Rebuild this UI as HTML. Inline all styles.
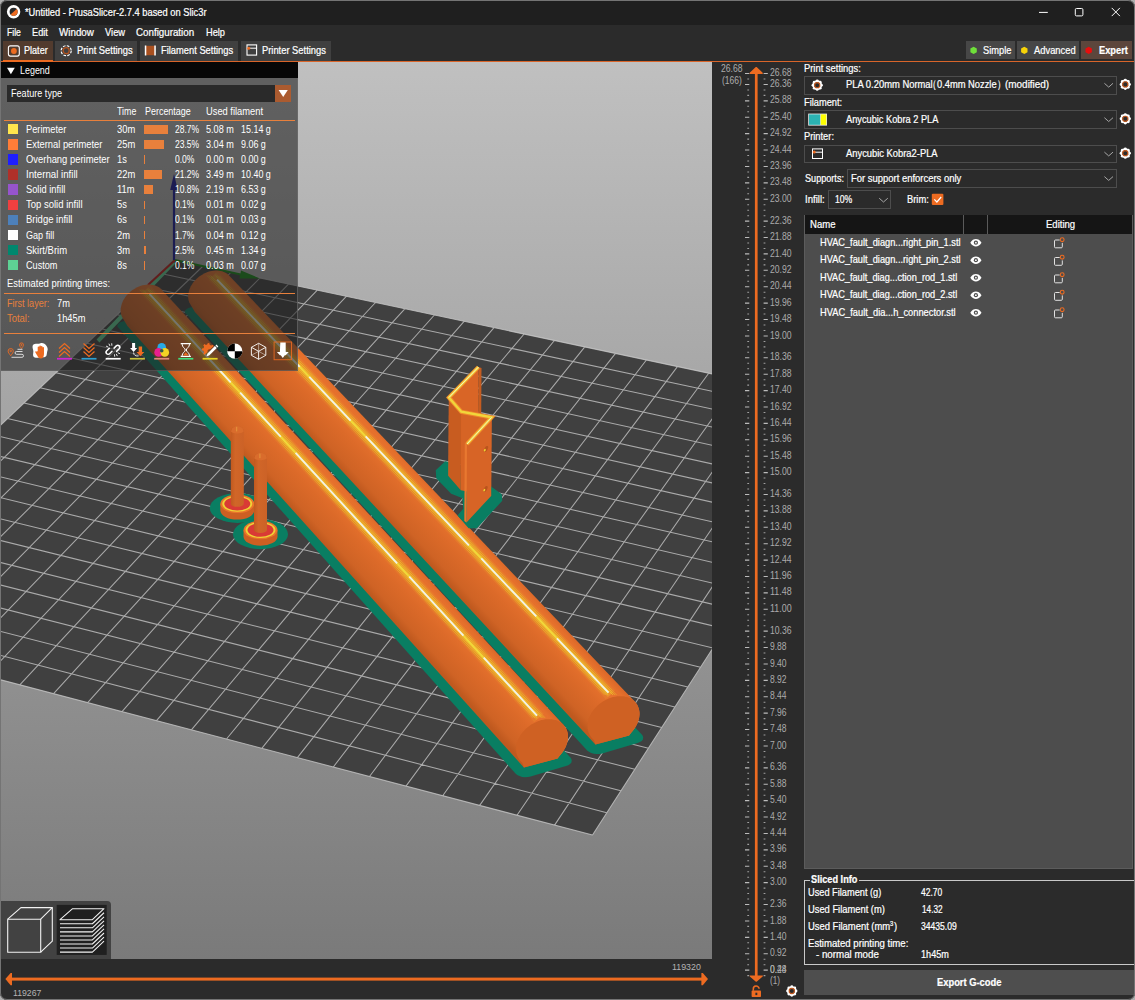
<!DOCTYPE html>
<html lang="en"><head><meta charset="utf-8"><title>*Untitled - PrusaSlicer-2.7.4 based on Slic3r</title>
<style>
html,body{margin:0;padding:0;background:#2b2b2b;}
body{width:1135px;height:1000px;position:relative;overflow:hidden;font-family:"Liberation Sans",sans-serif;}
.b{position:absolute;box-sizing:border-box;}
.t{position:absolute;white-space:pre;transform-origin:0 50%;}
.w{-webkit-text-stroke:0.22px;}
.scene{position:absolute;left:0;top:62px;}
</style></head>
<body>
<svg class="scene" width="712" height="897" viewBox="0 0 712 897">
<linearGradient id="bg" x1="0" y1="0" x2="0" y2="1"><stop offset="0" stop-color="#c0c0c0"/><stop offset="1" stop-color="#7a7a7a"/></linearGradient>
<rect width="712" height="897" fill="url(#bg)"/>
<polygon points="175,198 -210,562.5 592.5,773 868,345" fill="#404040"/>
<path d="M175 198L868 345M175 198L-210 562.5M160.8 211.4L858 360.5M203.1 204L-177.9 570.9M146.5 225L847.9 376.3M231.4 210L-145.5 579.4M131.9 238.8L837.6 392.3M259.9 216L-112.9 588M117.2 252.8L827.1 408.5M288.5 222.1L-80.1 596.6M102.2 266.9L816.5 425M317.3 228.2L-47.1 605.2M87 281.3L805.7 441.8M346.3 234.3L-13.7 614M71.6 295.9L794.8 458.8M375.5 240.5L19.8 622.8M55.9 310.7L783.6 476.1M404.8 246.8L53.6 631.6M40 325.8L772.3 493.6M434.4 253L87.7 640.6M23.9 341L760.8 511.5M464.1 259.3L122 649.6M7.5 356.5L749.1 529.6M494 265.7L156.5 658.6M-9.1 372.3L737.3 548.1M524.1 272L191.4 667.8M-25.9 388.2L725.2 566.8M554.4 278.5L226.5 677M-43.1 404.4L712.9 585.9M584.8 284.9L261.8 686.3M-60.5 420.9L700.5 605.3M615.5 291.4L297.4 695.6M-78.1 437.6L687.8 625M646.4 298L333.3 705M-96.1 454.6L674.9 645.1M677.4 304.6L369.5 714.5M-114.3 471.9L661.7 665.5M708.7 311.2L406 724.1M-132.8 489.4L648.4 686.2M740.1 317.9L442.7 733.7M-151.6 507.3L634.8 707.3M771.8 324.6L479.7 743.4M-170.8 525.4L620.9 728.8M803.7 331.4L517 753.2M-190.2 543.8L606.8 750.7M835.7 338.2L554.6 763.1M-210 562.5L592.5 773M868 345L592.5 773" stroke="#c8c8c8" stroke-opacity="0.78" stroke-width="1.05" fill="none"/>
<line x1="174" y1="200" x2="98" y2="279" stroke="#5ed194" stroke-width="4"/>
<line x1="175" y1="198" x2="148" y2="223" stroke="#c01818" stroke-width="2.2"/>
<line x1="175" y1="198" x2="243" y2="213" stroke="#128a12" stroke-width="2.2"/>
<polygon points="260,216.5 241,208.5 239.5,216.5" fill="#128a12"/>
<line x1="174" y1="198" x2="174" y2="126" stroke="#16169a" stroke-width="2.2"/>
<polygon points="174,112 170.2,128 177.8,128" fill="#16169a"/>
<polygon points="185,249 185.6,247.9 186.7,246.9 188.4,246.1 190.4,245.5 220.8,238.7 223,238.3 225.3,238.2 227.6,238.5 229.7,239 231.4,239.7 232.6,240.6 641.8,672.6 642.8,674.1 643.2,675.8 642.8,677.4 641.7,678.9 639.9,680.1 637.6,681.1 602.2,691.4 599.5,691.9 596.7,692 593.8,691.7 591.2,690.9 588.9,689.8 587.2,688.4 185.7,251.2 185,250.2" fill="#097e62"/>
<linearGradient id="rg2" gradientUnits="userSpaceOnUse" x1="392.3" y1="462" x2="431.7" y2="425"><stop offset="0" stop-color="#bf591f"/><stop offset="0.14" stop-color="#cf6325"/><stop offset="0.5" stop-color="#dc6a29"/><stop offset="0.78" stop-color="#e8732e"/><stop offset="0.92" stop-color="#e5702c"/><stop offset="1" stop-color="#dc6929"/></linearGradient>
<polygon points="188.1,234.2 188.2,232.5 188.5,230.9 188.9,229.2 189.4,227.6 190.1,225.9 190.8,224.3 191.8,222.7 192.8,221.1 194,219.6 195.3,218.2 196.7,216.8 198.1,215.5 199.7,214.3 201.3,213.2 203,212.2 204.7,211.3 206.5,210.5 208.3,209.8 210.1,209.3 211.9,208.9 213.7,208.7 215.5,208.5 217.2,208.5 219,208.7 220.6,208.9 222.2,209.3 223.7,209.9 225.1,210.5 226.4,211.3 227.7,212.2 228.8,213.2 634.7,639.6 635.9,640.9 636.9,642.3 637.7,643.8 638.4,645.4 638.9,647.1 639.3,648.9 639.5,650.7 639.5,652.6 639.3,654.5 639,656.4 638.5,658.3 637.8,660.2 637,662.2 636,664 634.9,665.9 633.6,667.7 629.1,673.5 595.4,682.5 194.9,250.1 189.9,241.6 189.2,240.2 188.7,238.8 188.4,237.3 188.2,235.7" fill="url(#rg2)"/>
<line x1="213" y1="213.5" x2="610.5" y2="632.9" stroke="#f6c030" stroke-width="13" stroke-opacity="0.13"/>
<line x1="213" y1="213.5" x2="610.5" y2="632.9" stroke="#f2d02c" stroke-width="7" stroke-opacity="0.22"/>
<line x1="207" y1="213.5" x2="604.5" y2="632.9" stroke="#ecd62a" stroke-width="0.8" stroke-opacity="0.55"/>
<line x1="208.8" y1="213.5" x2="606.3" y2="632.9" stroke="#ecd62a" stroke-width="0.8" stroke-opacity="0.7"/>
<line x1="210.6" y1="213.5" x2="608.1" y2="632.9" stroke="#ecd62a" stroke-width="0.8" stroke-opacity="0.8"/>
<line x1="215.4" y1="213.5" x2="612.9" y2="632.9" stroke="#ecd62a" stroke-width="0.8" stroke-opacity="0.8"/>
<line x1="217.2" y1="213.5" x2="614.7" y2="632.9" stroke="#ecd62a" stroke-width="0.8" stroke-opacity="0.7"/>
<line x1="219" y1="213.5" x2="616.5" y2="632.9" stroke="#ecd62a" stroke-width="0.8" stroke-opacity="0.5"/>
<line x1="217.1" y1="217.7" x2="608.5" y2="630.7" stroke="#f1dc3a" stroke-width="2.2" stroke-opacity="0.95"/>
<line x1="217.1" y1="217.7" x2="608.5" y2="630.7" stroke="#f3f0e6" stroke-width="1.8" stroke-opacity="1" stroke-dasharray="120 14 60 22 150 18 80 30"/>
<polygon points="629.1,673.5 630.7,671.1 632.3,669.4 633.7,667.7 634.9,665.9 636,664 637,662.2 637.8,660.2 638.5,658.3 639,656.4 639.3,654.5 639.5,652.6 639.5,650.7 639.3,648.9 638.9,647.1 638.4,645.4 637.7,643.8 636.9,642.3 635.9,640.9 634.7,639.6 633.5,638.5 632,637.4 630.5,636.5 628.8,635.8 627.1,635.1 625.3,634.7 623.3,634.3 621.4,634.2 619.3,634.2 617.2,634.3 615.1,634.7 613,635.1 610.9,635.7 608.8,636.5 606.8,637.4 604.8,638.4 602.8,639.6 600.9,640.9 599.1,642.3 597.4,643.8 595.8,645.4 594.3,647.1 593,648.8 591.7,650.6 590.7,652.5 589.7,654.4 588.9,656.3 588.3,658.3 587.9,660.2 587.6,662.1 587.5,664 587.6,665.8 587.8,667.6 588.2,669.4 588.8,671 589.5,672.6 590.4,674.1 591.4,675.5 592.6,676.7 593.9,677.9 595.4,682.5" fill="#cf6123"/>
<polygon points="445.5,400 436.5,408.5 437,416 451.5,431 463,435.5 464,447 458.5,453.5 469,465.5 476.5,465.5 501.5,438.5 501,432.5 492,426 470,408" fill="#097e62" stroke="#097e62" stroke-width="1.5" stroke-linejoin="round"/>
<polygon points="478.4,305.1 481.5,305.9 481,384.4 477.9,383.6" fill="#c55c20"/>
<polygon points="478.4,305.1 448.9,335.5 448.4,414 477.9,383.6" fill="#d96526"/>
<polygon points="448.9,335.5 461.3,349.7 460.8,428.2 448.4,414" fill="#c85c20"/>
<polygon points="461.3,349.7 491.6,355.4 491.1,433.9 460.8,428.2" fill="#d66425"/>
<polygon points="491.6,355.4 467,382 466.5,460.5 491.1,433.9" fill="#d76426"/>
<polygon points="467,382 464.8,380.5 464.3,459 466.5,460.5" fill="#e87830"/>
<polyline points="478.4,305.1 448.9,335.5 461.3,349.7 491.6,355.4 467,382" fill="none" stroke="#ef8a2c" stroke-width="4.2" stroke-linejoin="miter"/>
<polyline points="478.4,305.1 448.9,335.5 461.3,349.7 491.6,355.4 467,382" fill="none" stroke="#f1d63a" stroke-width="2.4" stroke-linejoin="miter"/>
<polyline points="478.4,305.1 448.9,335.5" fill="none" stroke="#f5f0d0" stroke-width="0.9"/>
<polyline points="491.6,355.4 467,382" fill="none" stroke="#f5f0d0" stroke-width="0.9"/>
<ellipse cx="486" cy="387" rx="1.6" ry="3.3" transform="rotate(28 486 387)" fill="#b9541d"/>
<ellipse cx="485.5" cy="388.6" rx="0.9" ry="1.4" transform="rotate(28 486 387)" fill="#f0d234"/>
<ellipse cx="485.5" cy="427" rx="1.6" ry="3.3" transform="rotate(28 485.5 427)" fill="#b9541d"/>
<ellipse cx="485" cy="428.6" rx="0.9" ry="1.4" transform="rotate(28 485.5 427)" fill="#f0d234"/>
<polygon points="117.5,263.1 118.1,262 119.3,260.9 121,260.1 123,259.5 153.3,252.6 155.6,252.2 157.9,252.1 160.2,252.4 162.3,252.9 163.9,253.6 165.2,254.6 570.4,695.5 571.4,697.1 571.7,698.8 571.3,700.4 570.1,701.9 568.3,703.2 566,704.1 530.6,714.6 527.9,715.1 525,715.2 522.1,714.9 519.5,714.1 517.2,713 515.5,711.6 118.1,265.3 117.5,264.2" fill="#097e62"/>
<linearGradient id="rg1" gradientUnits="userSpaceOnUse" x1="322.5" y1="480.2" x2="362.5" y2="443.8"><stop offset="0" stop-color="#bf591f"/><stop offset="0.14" stop-color="#cf6325"/><stop offset="0.5" stop-color="#dc6a29"/><stop offset="0.78" stop-color="#e8732e"/><stop offset="0.92" stop-color="#e5702c"/><stop offset="1" stop-color="#dc6929"/></linearGradient>
<polygon points="120.6,248.2 120.7,246.5 121,244.9 121.4,243.2 121.9,241.6 122.5,239.9 123.3,238.3 124.3,236.7 125.3,235.1 126.5,233.6 127.8,232.2 129.2,230.8 130.6,229.5 132.2,228.3 133.8,227.2 135.5,226.2 137.2,225.3 139,224.5 140.8,223.8 142.6,223.3 144.4,222.9 146.2,222.7 148,222.5 149.8,222.5 151.5,222.7 153.1,222.9 154.7,223.3 156.2,223.9 157.6,224.5 158.9,225.3 160.2,226.2 161.3,227.2 563.2,662.6 564.4,663.9 565.4,665.3 566.2,666.8 566.9,668.4 567.4,670.1 567.8,671.9 568,673.7 568,675.6 567.8,677.5 567.5,679.4 567,681.3 566.3,683.2 565.5,685.2 564.5,687 563.4,688.9 562.1,690.7 557.6,696.5 523.9,705.5 127.4,264.1 122.4,255.6 121.7,254.2 121.2,252.8 120.9,251.3 120.7,249.7" fill="url(#rg1)"/>
<line x1="145.5" y1="227.6" x2="539" y2="655.8" stroke="#f6c030" stroke-width="13" stroke-opacity="0.13"/>
<line x1="145.5" y1="227.6" x2="539" y2="655.8" stroke="#f2d02c" stroke-width="7" stroke-opacity="0.22"/>
<line x1="139.5" y1="227.6" x2="533" y2="655.8" stroke="#ecd62a" stroke-width="0.8" stroke-opacity="0.55"/>
<line x1="141.3" y1="227.6" x2="534.8" y2="655.8" stroke="#ecd62a" stroke-width="0.8" stroke-opacity="0.7"/>
<line x1="143.1" y1="227.6" x2="536.6" y2="655.8" stroke="#ecd62a" stroke-width="0.8" stroke-opacity="0.8"/>
<line x1="147.9" y1="227.6" x2="541.4" y2="655.8" stroke="#ecd62a" stroke-width="0.8" stroke-opacity="0.8"/>
<line x1="149.7" y1="227.6" x2="543.2" y2="655.8" stroke="#ecd62a" stroke-width="0.8" stroke-opacity="0.7"/>
<line x1="151.5" y1="227.6" x2="545" y2="655.8" stroke="#ecd62a" stroke-width="0.8" stroke-opacity="0.5"/>
<line x1="149.5" y1="231.9" x2="537" y2="653.7" stroke="#f1dc3a" stroke-width="2.2" stroke-opacity="0.95"/>
<line x1="149.5" y1="231.9" x2="537" y2="653.7" stroke="#f3f0e6" stroke-width="1.8" stroke-opacity="1" stroke-dasharray="120 14 60 22 150 18 80 30"/>
<polygon points="557.6,696.5 559.2,694.1 560.8,692.4 562.2,690.7 563.4,688.9 564.5,687 565.5,685.2 566.3,683.2 567,681.3 567.5,679.4 567.8,677.5 568,675.6 568,673.7 567.8,671.9 567.4,670.1 566.9,668.4 566.2,666.8 565.4,665.3 564.4,663.9 563.2,662.6 562,661.5 560.5,660.4 559,659.5 557.3,658.8 555.6,658.1 553.8,657.7 551.8,657.3 549.9,657.2 547.8,657.2 545.7,657.3 543.6,657.7 541.5,658.1 539.4,658.7 537.3,659.5 535.3,660.4 533.3,661.4 531.3,662.6 529.4,663.9 527.6,665.3 525.9,666.8 524.3,668.4 522.8,670.1 521.5,671.8 520.2,673.6 519.2,675.5 518.2,677.4 517.4,679.3 516.8,681.3 516.4,683.2 516.1,685.1 516,687 516.1,688.8 516.3,690.6 516.7,692.4 517.3,694 518,695.6 518.9,697.1 519.9,698.5 521.1,699.7 522.4,700.9 523.9,705.5" fill="#cf6123"/>
<ellipse cx="237.3" cy="446" rx="27.5" ry="15" fill="#097e62"/>
<path d="M220.3 441.8v6.5a17 9.3 0 0 0 34 0v-6.5z" fill="#cd5f22"/>
<ellipse cx="237.3" cy="441.8" rx="17" ry="9.3" fill="#e9742b"/>
<ellipse cx="237.3" cy="441.8" rx="15" ry="8" fill="#f0d234"/>
<ellipse cx="237.3" cy="441.8" rx="13" ry="6.8" fill="#d93a35"/>
<linearGradient id="pg237" gradientUnits="userSpaceOnUse" x1="230.7" y1="0" x2="243.9" y2="0"><stop offset="0" stop-color="#c0591f"/><stop offset="0.35" stop-color="#d16628"/><stop offset="1" stop-color="#cc6227"/></linearGradient>
<path d="M230.8 368.8L232.1 365.8L235.9 364L238.9 364L242.7 365.8L243.8 368.8V441.8a6.5 3 0 0 1 -13 0z" fill="url(#pg237)"/>
<path d="M231 369.2L232.3 366L235.9 364.3L238.9 364.3L242.5 366L243.6 369.2a6.3 2.2 0 0 1 -12.6 0z" fill="#d96c2c"/>
<path d="M236.7 364.8v4.6" stroke="#e8a040" stroke-width="0.8"/>
<ellipse cx="260.5" cy="472.2" rx="27.5" ry="15" fill="#097e62"/>
<path d="M243.5 468v6.5a17 9.3 0 0 0 34 0v-6.5z" fill="#cd5f22"/>
<ellipse cx="260.5" cy="468" rx="17" ry="9.3" fill="#e9742b"/>
<ellipse cx="260.5" cy="468" rx="15" ry="8" fill="#f0d234"/>
<ellipse cx="260.5" cy="468" rx="13" ry="6.8" fill="#d93a35"/>
<linearGradient id="pg260" gradientUnits="userSpaceOnUse" x1="253.9" y1="0" x2="267.1" y2="0"><stop offset="0" stop-color="#c0591f"/><stop offset="0.35" stop-color="#d16628"/><stop offset="1" stop-color="#cc6227"/></linearGradient>
<path d="M254 395.6L255.3 392.6L259.1 390.8L262.1 390.8L265.9 392.6L267 395.6V468a6.5 3 0 0 1 -13 0z" fill="url(#pg260)"/>
<path d="M254.2 396L255.5 392.8L259.1 391.1L262.1 391.1L265.7 392.8L266.8 396a6.3 2.2 0 0 1 -12.6 0z" fill="#d96c2c"/>
<path d="M259.9 391.6v4.6" stroke="#e8a040" stroke-width="0.8"/>
</svg>
<div class="b " style="left:0px;top:0px;width:1135px;height:24.6px;background:#1f1f1f;"></div>
<svg class="b" style="left:6px;top:4px;" width="16" height="16" viewBox="0 0 16 16"><circle cx="7.6" cy="7.8" r="6.7" fill="#fff"/><circle cx="7.6" cy="7.8" r="4" fill="#2a2a2a"/><path d="M4.6 10.6A4 4 0 0 0 10.6 4.9z" fill="#ed6b21"/></svg>
<span class="t w" style="left:24.7px;top:6px;font-size:10.5px;line-height:12px;transform:scaleX(0.886);color:#fff;">*Untitled - PrusaSlicer-2.7.4 based on Slic3r</span>
<svg class="b" style="left:1030px;top:0px;" width="100" height="24" viewBox="0 0 100 24"><path d="M9 12.4h8.8" stroke="#fff" stroke-width="1" fill="none"/><rect x="45.3" y="8.5" width="7.6" height="7.4" rx="1.2" fill="none" stroke="#fff" stroke-width="1"/><path d="M81.7 7.9l8.2 8.2M89.9 7.9l-8.2 8.2" stroke="#fff" stroke-width="1" fill="none"/></svg>
<span class="t w" style="left:6.8px;top:26px;font-size:10.5px;line-height:12px;transform:scaleX(0.822);color:#fff;">File</span>
<span class="t w" style="left:32.1px;top:26px;font-size:10.5px;line-height:12px;transform:scaleX(0.879);color:#fff;">Edit</span>
<span class="t w" style="left:59.2px;top:26px;font-size:10.5px;line-height:12px;transform:scaleX(0.935);color:#fff;">Window</span>
<span class="t w" style="left:105.1px;top:26px;font-size:10.5px;line-height:12px;transform:scaleX(0.891);color:#fff;">View</span>
<span class="t w" style="left:136.4px;top:26px;font-size:10.5px;line-height:12px;transform:scaleX(0.930);color:#fff;">Configuration</span>
<span class="t w" style="left:206.2px;top:26px;font-size:10.5px;line-height:12px;transform:scaleX(0.880);color:#fff;">Help</span>
<div class="b " style="left:2.7px;top:41.3px;width:50.2px;height:19.6px;background:#523b2e;"></div>
<div class="b " style="left:55.4px;top:41.3px;width:82.1px;height:19.6px;background:#404040;"></div>
<div class="b " style="left:139.6px;top:41.3px;width:98.9px;height:19.6px;background:#404040;"></div>
<div class="b " style="left:241px;top:41.3px;width:89.9px;height:19.6px;background:#404040;"></div>
<div class="b " style="left:0px;top:60.8px;width:1135px;height:1.4px;background:#d9652a;"></div>
<div class="b " style="left:2.7px;top:59.6px;width:50.2px;height:2.6px;background:#ed6b21;"></div>
<span class="t w" style="left:23.9px;top:44px;font-size:10.5px;line-height:12px;transform:scaleX(0.864);color:#fff;">Plater</span>
<span class="t w" style="left:76.5px;top:44px;font-size:10.5px;line-height:12px;transform:scaleX(0.892);color:#fff;">Print Settings</span>
<span class="t w" style="left:161.1px;top:44px;font-size:10.5px;line-height:12px;transform:scaleX(0.889);color:#fff;">Filament Settings</span>
<span class="t w" style="left:261.7px;top:44px;font-size:10.5px;line-height:12px;transform:scaleX(0.890);color:#fff;">Printer Settings</span>
<svg class="b" style="left:7px;top:44px;" width="14" height="14" viewBox="0 0 14 14"><rect x="1.4" y="1.9" width="10.9" height="10.2" rx="2" fill="none" stroke="#fff" stroke-width="1.1"/><circle cx="6.9" cy="7" r="2.9" fill="#ed6b21"/></svg>
<svg class="b" style="left:59px;top:44px;" width="14" height="14" viewBox="0 0 14 14"><circle cx="7.2" cy="6.7" r="5" fill="none" stroke="#fff" stroke-width="1.2" stroke-dasharray="2.6 1.33"/><circle cx="7.2" cy="6.7" r="3" fill="none" stroke="#b3531f" stroke-width="1.3"/></svg>
<svg class="b" style="left:144px;top:44px;" width="14" height="14" viewBox="0 0 14 14"><rect x="1.6" y="1.8" width="9.4" height="9.4" fill="#a9501f"/><rect x="0.8" y="1.5" width="1.5" height="10" fill="#fff"/><rect x="10.3" y="1.5" width="1.5" height="10" fill="#fff"/></svg>
<svg class="b" style="left:245px;top:43px;" width="14" height="14" viewBox="0 0 14 14"><rect x="2" y="1.9" width="9.6" height="10.2" fill="none" stroke="#fff" stroke-width="1.1"/><path d="M2 5.2h9.6" stroke="#fff" stroke-width="1"/><circle cx="3.7" cy="5.2" r="1.5" fill="#ed6b21"/></svg>
<div class="b " style="left:966.1px;top:41.2px;width:48.9px;height:18.3px;background:#474747;"></div>
<div class="b " style="left:1016.8px;top:41.2px;width:62.4px;height:18.3px;background:#474747;"></div>
<div class="b " style="left:1081.4px;top:41.2px;width:50.4px;height:18.3px;background:#5c463c;"></div>
<svg class="b" style="left:966px;top:41px;" width="170" height="19" viewBox="0 0 170 19"><polygon points="10.80,11.25 7.60,13.10 4.40,11.25 4.40,7.55 7.60,5.70 10.80,7.55" fill="#6fe03a"/><polygon points="61.50,11.25 58.30,13.10 55.10,11.25 55.10,7.55 58.30,5.70 61.50,7.55" fill="#f7d308"/><polygon points="125.90,11.25 122.70,13.10 119.50,11.25 119.50,7.55 122.70,5.70 125.90,7.55" fill="#e80d0d"/></svg>
<span class="t w" style="left:983.2px;top:44px;font-size:10.5px;line-height:12px;transform:scaleX(0.885);color:#fff;">Simple</span>
<span class="t w" style="left:1034.3px;top:44px;font-size:10.5px;line-height:12px;transform:scaleX(0.893);color:#fff;">Advanced</span>
<span class="t w" style="left:1099px;top:44px;font-size:10.5px;line-height:12px;transform:scaleX(0.884);color:#fff;font-weight:bold;">Expert</span>
<div class="b " style="left:1px;top:62.3px;width:297px;height:308.6px;background:rgba(34,34,34,0.6);border-right:1px solid rgba(110,110,110,0.7);border-bottom:1px solid rgba(110,110,110,0.5);"></div>
<div class="b " style="left:1px;top:62.3px;width:297px;height:16.2px;background:#070707;"></div>
<svg class="b" style="left:6px;top:66px;" width="10" height="10" viewBox="0 0 10 10"><polygon points="1,1.8 8.8,1.8 4.9,8.2" fill="#fff"/></svg>
<span class="t" style="left:20.2px;top:65px;font-size:10.4px;line-height:11px;transform:scaleX(0.859);color:#fff;">Legend</span>
<div class="b " style="left:7px;top:85.4px;width:268px;height:16.5px;background:#2a2a2a;"></div>
<div class="b " style="left:274.8px;top:85.4px;width:16.5px;height:16.5px;background:#ab5b30;"></div>
<svg class="b" style="left:275px;top:85.4px;" width="16" height="16.5" viewBox="0 0 16 16.5"><polygon points="3.6,5 12.8,5 8.2,12" fill="#fff"/></svg>
<span class="t" style="left:10.6px;top:88px;font-size:10.4px;line-height:11px;transform:scaleX(0.875);color:#fff;">Feature type</span>
<span class="t" style="left:117.3px;top:106px;font-size:10.4px;line-height:11px;transform:scaleX(0.854);color:#fff;">Time</span>
<span class="t" style="left:144.5px;top:106px;font-size:10.4px;line-height:11px;transform:scaleX(0.861);color:#fff;">Percentage</span>
<span class="t" style="left:205.5px;top:106px;font-size:10.4px;line-height:11px;transform:scaleX(0.898);color:#fff;">Used filament</span>
<div class="b " style="left:4px;top:120.2px;width:291px;height:1px;background:#e8803c;"></div>
<div class="b " style="left:7.8px;top:124.1px;width:10.4px;height:10.4px;background:#ffe64d;"></div>
<span class="t" style="left:25.7px;top:124px;font-size:10.4px;line-height:11px;transform:scaleX(0.894);color:#fff;">Perimeter</span>
<span class="t" style="left:117px;top:124px;font-size:10.4px;line-height:11px;transform:scaleX(0.900);color:#fff;">30m</span>
<div class="b " style="left:143.9px;top:125.1px;width:23.99px;height:8.7px;background:#e8803c;"></div>
<span class="t" style="left:174.5px;top:124px;font-size:10.4px;line-height:11px;transform:scaleX(0.820);color:#fff;">28.7%</span>
<span class="t" style="left:205.5px;top:124px;font-size:10.4px;line-height:11px;transform:scaleX(0.875);color:#fff;">5.08 m</span>
<span class="t" style="left:240.8px;top:124px;font-size:10.4px;line-height:11px;transform:scaleX(0.860);color:#fff;">15.14 g</span>
<div class="b " style="left:7.8px;top:139.18px;width:10.4px;height:10.4px;background:#ff7d38;"></div>
<span class="t" style="left:25.7px;top:139px;font-size:10.4px;line-height:11px;transform:scaleX(0.900);color:#fff;">External perimeter</span>
<span class="t" style="left:117px;top:139px;font-size:10.4px;line-height:11px;transform:scaleX(0.900);color:#fff;">25m</span>
<div class="b " style="left:143.9px;top:140.18px;width:19.65px;height:8.7px;background:#e8803c;"></div>
<span class="t" style="left:174.5px;top:139px;font-size:10.4px;line-height:11px;transform:scaleX(0.820);color:#fff;">23.5%</span>
<span class="t" style="left:205.5px;top:139px;font-size:10.4px;line-height:11px;transform:scaleX(0.875);color:#fff;">3.04 m</span>
<span class="t" style="left:240.8px;top:139px;font-size:10.4px;line-height:11px;transform:scaleX(0.860);color:#fff;">9.06 g</span>
<div class="b " style="left:7.8px;top:154.26px;width:10.4px;height:10.4px;background:#1f1fff;"></div>
<span class="t" style="left:25.7px;top:154px;font-size:10.4px;line-height:11px;transform:scaleX(0.906);color:#fff;">Overhang perimeter</span>
<span class="t" style="left:117px;top:154px;font-size:10.4px;line-height:11px;transform:scaleX(0.900);color:#fff;">1s</span>
<div class="b " style="left:143.9px;top:155.26px;width:1px;height:8.7px;background:#e8803c;"></div>
<span class="t" style="left:174.5px;top:154px;font-size:10.4px;line-height:11px;transform:scaleX(0.820);color:#fff;">0.0%</span>
<span class="t" style="left:205.5px;top:154px;font-size:10.4px;line-height:11px;transform:scaleX(0.875);color:#fff;">0.00 m</span>
<span class="t" style="left:240.8px;top:154px;font-size:10.4px;line-height:11px;transform:scaleX(0.860);color:#fff;">0.00 g</span>
<div class="b " style="left:7.8px;top:169.34px;width:10.4px;height:10.4px;background:#b03029;"></div>
<span class="t" style="left:25.7px;top:169px;font-size:10.4px;line-height:11px;transform:scaleX(0.933);color:#fff;">Internal infill</span>
<span class="t" style="left:117px;top:169px;font-size:10.4px;line-height:11px;transform:scaleX(0.900);color:#fff;">22m</span>
<div class="b " style="left:143.9px;top:170.34px;width:17.72px;height:8.7px;background:#e8803c;"></div>
<span class="t" style="left:174.5px;top:169px;font-size:10.4px;line-height:11px;transform:scaleX(0.820);color:#fff;">21.2%</span>
<span class="t" style="left:205.5px;top:169px;font-size:10.4px;line-height:11px;transform:scaleX(0.875);color:#fff;">3.49 m</span>
<span class="t" style="left:240.8px;top:169px;font-size:10.4px;line-height:11px;transform:scaleX(0.860);color:#fff;">10.40 g</span>
<div class="b " style="left:7.8px;top:184.42px;width:10.4px;height:10.4px;background:#9654cc;"></div>
<span class="t" style="left:25.7px;top:184px;font-size:10.4px;line-height:11px;transform:scaleX(0.895);color:#fff;">Solid infill</span>
<span class="t" style="left:117px;top:184px;font-size:10.4px;line-height:11px;transform:scaleX(0.900);color:#fff;">11m</span>
<div class="b " style="left:143.9px;top:185.42px;width:9.03px;height:8.7px;background:#e8803c;"></div>
<span class="t" style="left:174.5px;top:184px;font-size:10.4px;line-height:11px;transform:scaleX(0.820);color:#fff;">10.8%</span>
<span class="t" style="left:205.5px;top:184px;font-size:10.4px;line-height:11px;transform:scaleX(0.875);color:#fff;">2.19 m</span>
<span class="t" style="left:240.8px;top:184px;font-size:10.4px;line-height:11px;transform:scaleX(0.860);color:#fff;">6.53 g</span>
<div class="b " style="left:7.8px;top:199.5px;width:10.4px;height:10.4px;background:#f04040;"></div>
<span class="t" style="left:25.7px;top:199px;font-size:10.4px;line-height:11px;transform:scaleX(0.915);color:#fff;">Top solid infill</span>
<span class="t" style="left:117px;top:199px;font-size:10.4px;line-height:11px;transform:scaleX(0.900);color:#fff;">5s</span>
<div class="b " style="left:143.9px;top:200.5px;width:1px;height:8.7px;background:#e8803c;"></div>
<span class="t" style="left:174.5px;top:199px;font-size:10.4px;line-height:11px;transform:scaleX(0.820);color:#fff;">0.1%</span>
<span class="t" style="left:205.5px;top:199px;font-size:10.4px;line-height:11px;transform:scaleX(0.875);color:#fff;">0.01 m</span>
<span class="t" style="left:240.8px;top:199px;font-size:10.4px;line-height:11px;transform:scaleX(0.860);color:#fff;">0.02 g</span>
<div class="b " style="left:7.8px;top:214.58px;width:10.4px;height:10.4px;background:#4d80ba;"></div>
<span class="t" style="left:25.7px;top:214px;font-size:10.4px;line-height:11px;transform:scaleX(0.914);color:#fff;">Bridge infill</span>
<span class="t" style="left:117px;top:214px;font-size:10.4px;line-height:11px;transform:scaleX(0.900);color:#fff;">6s</span>
<div class="b " style="left:143.9px;top:215.58px;width:1px;height:8.7px;background:#e8803c;"></div>
<span class="t" style="left:174.5px;top:214px;font-size:10.4px;line-height:11px;transform:scaleX(0.820);color:#fff;">0.1%</span>
<span class="t" style="left:205.5px;top:214px;font-size:10.4px;line-height:11px;transform:scaleX(0.875);color:#fff;">0.01 m</span>
<span class="t" style="left:240.8px;top:214px;font-size:10.4px;line-height:11px;transform:scaleX(0.860);color:#fff;">0.03 g</span>
<div class="b " style="left:7.8px;top:229.66px;width:10.4px;height:10.4px;background:#ffffff;"></div>
<span class="t" style="left:25.7px;top:230px;font-size:10.4px;line-height:11px;transform:scaleX(0.874);color:#fff;">Gap fill</span>
<span class="t" style="left:117px;top:230px;font-size:10.4px;line-height:11px;transform:scaleX(0.900);color:#fff;">2m</span>
<div class="b " style="left:143.9px;top:230.66px;width:1.42px;height:8.7px;background:#e8803c;"></div>
<span class="t" style="left:174.5px;top:230px;font-size:10.4px;line-height:11px;transform:scaleX(0.820);color:#fff;">1.7%</span>
<span class="t" style="left:205.5px;top:230px;font-size:10.4px;line-height:11px;transform:scaleX(0.875);color:#fff;">0.04 m</span>
<span class="t" style="left:240.8px;top:230px;font-size:10.4px;line-height:11px;transform:scaleX(0.860);color:#fff;">0.12 g</span>
<div class="b " style="left:7.8px;top:244.74px;width:10.4px;height:10.4px;background:#00876e;"></div>
<span class="t" style="left:25.7px;top:245px;font-size:10.4px;line-height:11px;transform:scaleX(0.912);color:#fff;">Skirt/Brim</span>
<span class="t" style="left:117px;top:245px;font-size:10.4px;line-height:11px;transform:scaleX(0.900);color:#fff;">3m</span>
<div class="b " style="left:143.9px;top:245.74px;width:2.09px;height:8.7px;background:#e8803c;"></div>
<span class="t" style="left:174.5px;top:245px;font-size:10.4px;line-height:11px;transform:scaleX(0.820);color:#fff;">2.5%</span>
<span class="t" style="left:205.5px;top:245px;font-size:10.4px;line-height:11px;transform:scaleX(0.875);color:#fff;">0.45 m</span>
<span class="t" style="left:240.8px;top:245px;font-size:10.4px;line-height:11px;transform:scaleX(0.860);color:#fff;">1.34 g</span>
<div class="b " style="left:7.8px;top:259.82px;width:10.4px;height:10.4px;background:#5ed194;"></div>
<span class="t" style="left:25.7px;top:260px;font-size:10.4px;line-height:11px;transform:scaleX(0.879);color:#fff;">Custom</span>
<span class="t" style="left:117px;top:260px;font-size:10.4px;line-height:11px;transform:scaleX(0.900);color:#fff;">8s</span>
<div class="b " style="left:143.9px;top:260.82px;width:1px;height:8.7px;background:#e8803c;"></div>
<span class="t" style="left:174.5px;top:260px;font-size:10.4px;line-height:11px;transform:scaleX(0.820);color:#fff;">0.1%</span>
<span class="t" style="left:205.5px;top:260px;font-size:10.4px;line-height:11px;transform:scaleX(0.875);color:#fff;">0.03 m</span>
<span class="t" style="left:240.8px;top:260px;font-size:10.4px;line-height:11px;transform:scaleX(0.860);color:#fff;">0.07 g</span>
<span class="t" style="left:7.4px;top:278px;font-size:10.4px;line-height:11px;transform:scaleX(0.906);color:#fff;">Estimated printing times:</span>
<div class="b " style="left:4px;top:293px;width:291px;height:1px;background:#e8803c;"></div>
<span class="t" style="left:7.4px;top:298px;font-size:10.4px;line-height:11px;transform:scaleX(0.871);color:#e8803c;">First layer:</span>
<span class="t" style="left:56.8px;top:298px;font-size:10.4px;line-height:11px;transform:scaleX(0.893);color:#fff;">7m</span>
<span class="t" style="left:7.4px;top:313px;font-size:10.4px;line-height:11px;transform:scaleX(0.909);color:#e8803c;">Total:</span>
<span class="t" style="left:56.8px;top:313px;font-size:10.4px;line-height:11px;transform:scaleX(0.893);color:#fff;">1h45m</span>
<div class="b " style="left:4px;top:333.2px;width:291px;height:1px;background:#e8803c;"></div>
<svg class="b" style="left:0px;top:0px;" width="300" height="372" viewBox="0 0 300 372"><g transform="translate(7.5,342.5)"><g fill="none" stroke="#ed6b21" stroke-width="0.9"><path d="M3.2 13.2c-1.6-2.2-2.6-3.4-2.6-4.6a2.6 2.6 0 0 1 5.2 0c0 1.2-1 2.4-2.6 4.6z"/><circle cx="3.2" cy="8.5" r="0.8"/><path d="M14 6c-1.2-1.6-2-2.6-2-3.6a2 2 0 0 1 4 0c0 1-.8 2-2 3.6z"/><circle cx="14" cy="2.5" r="0.6"/></g><path d="M4 14.8h10.5a1.5 1.5 0 0 0 0-3h-5.5a1.4 1.4 0 0 1 0-2.8h6M10 6.8h5" fill="none" stroke="#e8e8e8" stroke-width="0.9"/></g><g transform="translate(31.5,342.5)"><path d="M1.5 2.5c2-2 5-.5 7-1.6 2.5-1.2 5 .3 6.2 2 .9 1.4 2 3.2 1.3 5.2-.6 1.8-.4 3.4-1.2 5.3-1.6 2-4 1-6.6 1.6-2.4.5-5.6.4-6.4-1.2-.8-2 .6-4-.2-6.5-.5-1.7-.9-3.6-.1-4.8z" fill="#fff"/><path d="M6.2 8.5v-3.8a.8.8 0 0 1 1.6 0v-1a.8.8 0 0 1 1.6 0v.6a.8.8 0 0 1 1.6 0v1a.75.75 0 0 1 1.5 0v6c0 2.6-1 4.8-3.2 4.8-2 0-2.6-1.2-3.6-3l-1.8-3.2c-.4-.9.6-1.5 1.3-.7z" fill="#ed6b21"/></g><g transform="translate(56.0,342.5)"><path d="M3 6l5.5-5 5.5 5M3 10l5.5-5 5.5 5M3 14l5.5-5 5.5 5" fill="none" stroke="#ed6b21" stroke-width="1.2"/><rect x="1" y="15.4" width="15" height="1.7" fill="#cf25cf"/></g><g transform="translate(80.5,342.5)"><path d="M3 1l5.5 5 5.5-5M3 5l5.5 5 5.5-5M3 9l5.5 5 5.5-5" fill="none" stroke="#ed6b21" stroke-width="1.2"/><rect x="1" y="15.4" width="15" height="1.7" fill="#2f9fd0"/></g><g transform="translate(104.7,342.5)"><g fill="none" stroke="#fff" stroke-width="1.5" stroke-linecap="round"><path d="M7.3 8.8l-2.4 2.4a2 2 0 0 1-2.9-2.9l2.6-2.6"/><path d="M9.4 5.6l2.2-2.2a2 2 0 0 1 2.9 2.9l-2.6 2.6"/></g><g stroke="#fff" stroke-width="0.9"><path d="M4.2 1.2l1 2.2M1.4 3.6l2.2 1M7 0.8l.2 2.4M12.6 13.6l-1-2.2M15.2 11.2l-2.2-1M10 14.2l-.2-2.4"/></g><rect x="1" y="15.4" width="15" height="1.7" fill="#fff"/></g><g transform="translate(128.9,342.5)"><path d="M3.2 0.6h3v5h2l-3.5 3.8-3.5-3.8h2z" fill="#fff"/><path d="M9.8 4h3.4v5.6h2.2l-3.9 4.2-3.9-4.2h2.2z" fill="#ed6b21"/><path d="M4.7 10c0 3 2.4 3.8 5 3.4" fill="none" stroke="#fff" stroke-width="0.9"/><rect x="1" y="15.4" width="15" height="1.7" fill="#c9c23e"/></g><g transform="translate(153.2,342.5)"><circle cx="8.5" cy="4.9" r="4.3" fill="#27a9e8"/><circle cx="5.4" cy="9.9" r="4.3" fill="#e81f8f"/><circle cx="11.6" cy="9.9" r="4.3" fill="#f3d324"/><circle cx="8.5" cy="8.2" r="1.8" fill="#305a4a"/><rect x="1" y="15.4" width="15" height="1.7" fill="#e08a7a"/></g><g transform="translate(177.3,342.5)"><path d="M3.4 1.2h10.2M3.4 13.8h10.2" stroke="#fff" stroke-width="1.3"/><path d="M4.8 1.6c0 3.4 3.2 4 3.2 5.9s-3.2 2.5-3.2 5.9M12.2 1.6c0 3.4-3.2 4-3.2 5.9s3.2 2.5 3.2 5.9" fill="none" stroke="#fff" stroke-width="1"/><path d="M6 13c.4-1.8 2-2 2.5-3.3.5 1.3 2.1 1.5 2.5 3.3z" fill="#ed6b21"/><rect x="1" y="15.4" width="15" height="1.7" fill="#3fe07f"/></g><g transform="translate(201.6,342.5)"><path d="M6.2 0.6l1.6.2.4 1.6 1.5.7 1.4-.8 1.1 1.1-3.6 3.4a2 2 0 0 0-2.6 2.6l-3.3 3-1-1.3.8-1.4-.6-1.5-1.6-.4v-1.7l1.6-.4.6-1.5-.8-1.4 1.2-1.2 1.4.8 1.5-.6z" fill="#ed6b21"/><path d="M5 13.8l.7-2.6 7.6-7.6 1.9 1.9-7.6 7.6z" fill="#fff"/><path d="M13.9 3l.9-.9 1.9 1.9-.9.9z" fill="#fff"/><rect x="1" y="15.4" width="15" height="1.7" fill="#e8d322"/></g><g transform="translate(226.3,342.5)"><circle cx="8.5" cy="8.7" r="7.6" fill="#fff"/><path d="M8.5 8.7V1.1A7.6 7.6 0 0 0 .9 8.7zM8.5 8.7v7.6a7.6 7.6 0 0 0 7.6-7.6z" fill="#000"/></g><g transform="translate(250.10000000000002,342.5)"><g fill="none" stroke="#fff" stroke-width="0.9"><path d="M8.5 0.8l7.2 4v8l-7.2 4-7.2-4v-8z"/><path d="M1.3 4.8l7.2 4 7.2-4M8.5 8.8v8" /><path d="M8.5 0.8v8M1.3 12.8l7.2-4 7.2 4" stroke-width="0.6" stroke-opacity="0.8"/></g></g><g transform="translate(274.3,342.5)"><rect x="-0.2" y="-0.5" width="17.4" height="17.7" fill="none" stroke="#ed6b21" stroke-width="1" stroke-opacity="0.85"/><path d="M6 0h5.4v9.6h3l-3 3.2h-.9l-2 2.6-2-2.6h-.9l-3-3.2h3z" fill="#fff"/></g></svg>
<div class="b " style="left:0px;top:959.3px;width:712.4px;height:41px;background:#2b2b2b;"></div>
<svg class="b" style="left:0px;top:959.3px;" width="712" height="41" viewBox="0 0 712 41"><rect x="11" y="18.6" width="691.5" height="3" fill="#ed6b21"/><path d="M5.4 20.1l5.2-6.2h1.4v12.4h-1.4z" fill="#ed6b21"/><path d="M708 20.1l-5.2-6.2h-1.4v12.4h1.4z" fill="#ed6b21"/></svg>
<span class="t" style="left:13.2px;top:987px;font-size:9.8px;line-height:11px;transform:scaleX(0.888);color:#b4b4b4;">119267</span>
<span class="t" style="left:672.2px;top:961px;font-size:9.8px;line-height:11px;transform:scaleX(0.901);color:#b4b4b4;">119320</span>
<div class="b " style="left:1px;top:900.5px;width:110.2px;height:58.8px;background:#424242;border-top-right-radius:4px;"></div>
<svg class="b" style="left:0px;top:900px;" width="112" height="60" viewBox="0 900 112 60"><g fill="none" stroke="#f2f2f2" stroke-width="1.1" stroke-linejoin="round"><path d="M7.7 919.2h33v33h-33z"/><path d="M7.7 919.2l13.2-11.6h31.4l-11.6 11.6"/><path d="M52.3 907.6v33.6l-11.6 11"/></g><rect x="56.7" y="904.9" width="50" height="50" fill="#202020"/><g fill="none" stroke="#f2f2f2" stroke-width="1.05" stroke-linejoin="round"><path d="M60 919.7l12.6-11h31.4l-11.6 11z"/><path d="M60 923.75h32.4l11.6-11"/><path d="M60 927.80h32.4l11.6-11"/><path d="M60 931.85h32.4l11.6-11"/><path d="M60 935.90h32.4l11.6-11"/><path d="M60 939.95h32.4l11.6-11"/><path d="M60 944.00h32.4l11.6-11"/><path d="M60 948.05h32.4l11.6-11"/><path d="M60 952.10h32.4l11.6-11"/></g></svg>
<svg class="b" style="left:712px;top:62px;" width="90" height="938" viewBox="712 62 90 938"><path d="M745 970.13h4.3M763.6 970.13h4.2M745 953.73h4.3M763.6 953.73h4.2M745 937.33h4.3M763.6 937.33h4.2M745 920.93h4.3M763.6 920.93h4.2M745 904.53h4.3M763.6 904.53h4.2M745 882.66h4.3M763.6 882.66h4.2M745 866.25h4.3M763.6 866.25h4.2M745 849.85h4.3M763.6 849.85h4.2M745 833.45h4.3M763.6 833.45h4.2M745 817.05h4.3M763.6 817.05h4.2M745 800.65h4.3M763.6 800.65h4.2M745 784.25h4.3M763.6 784.25h4.2M745 767.84h4.3M763.6 767.84h4.2M745 745.97h4.3M763.6 745.97h4.2M745 729.57h4.3M763.6 729.57h4.2M745 713.17h4.3M763.6 713.17h4.2M745 696.77h4.3M763.6 696.77h4.2M745 680.37h4.3M763.6 680.37h4.2M745 663.97h4.3M763.6 663.97h4.2M745 647.56h4.3M763.6 647.56h4.2M745 631.16h4.3M763.6 631.16h4.2M745 609.29h4.3M763.6 609.29h4.2M745 592.89h4.3M763.6 592.89h4.2M745 576.49h4.3M763.6 576.49h4.2M745 560.09h4.3M763.6 560.09h4.2M745 543.69h4.3M763.6 543.69h4.2M745 527.28h4.3M763.6 527.28h4.2M745 510.88h4.3M763.6 510.88h4.2M745 494.48h4.3M763.6 494.48h4.2M745 472.61h4.3M763.6 472.61h4.2M745 456.21h4.3M763.6 456.21h4.2M745 439.81h4.3M763.6 439.81h4.2M745 423.41h4.3M763.6 423.41h4.2M745 407.00h4.3M763.6 407.00h4.2M745 390.60h4.3M763.6 390.60h4.2M745 374.20h4.3M763.6 374.20h4.2M745 357.80h4.3M763.6 357.80h4.2M745 335.93h4.3M763.6 335.93h4.2M745 319.53h4.3M763.6 319.53h4.2M745 303.13h4.3M763.6 303.13h4.2M745 286.72h4.3M763.6 286.72h4.2M745 270.32h4.3M763.6 270.32h4.2M745 253.92h4.3M763.6 253.92h4.2M745 237.52h4.3M763.6 237.52h4.2M745 221.12h4.3M763.6 221.12h4.2M745 199.25h4.3M763.6 199.25h4.2M745 182.85h4.3M763.6 182.85h4.2M745 166.44h4.3M763.6 166.44h4.2M745 150.04h4.3M763.6 150.04h4.2M745 133.64h4.3M763.6 133.64h4.2M745 117.24h4.3M763.6 117.24h4.2M745 100.84h4.3M763.6 100.84h4.2M745 84.43h4.3M763.6 84.43h4.2M745 73.50h4.3M763.6 73.50h4.2" stroke="#bcbcbc" stroke-width="1.1" fill="none"/><path d="M747.3 975.60h1.8M763.6 975.60h1.8M747.3 964.67h1.8M763.6 964.67h1.8M747.3 959.20h1.8M763.6 959.20h1.8M747.3 948.26h1.8M763.6 948.26h1.8M747.3 942.80h1.8M763.6 942.80h1.8M747.3 931.86h1.8M763.6 931.86h1.8M747.3 926.39h1.8M763.6 926.39h1.8M747.3 915.46h1.8M763.6 915.46h1.8M747.3 909.99h1.8M763.6 909.99h1.8M747.3 899.06h1.8M763.6 899.06h1.8M747.3 893.59h1.8M763.6 893.59h1.8M747.3 888.12h1.8M763.6 888.12h1.8M747.3 877.19h1.8M763.6 877.19h1.8M747.3 871.72h1.8M763.6 871.72h1.8M747.3 860.79h1.8M763.6 860.79h1.8M747.3 855.32h1.8M763.6 855.32h1.8M747.3 844.39h1.8M763.6 844.39h1.8M747.3 838.92h1.8M763.6 838.92h1.8M747.3 827.98h1.8M763.6 827.98h1.8M747.3 822.52h1.8M763.6 822.52h1.8M747.3 811.58h1.8M763.6 811.58h1.8M747.3 806.11h1.8M763.6 806.11h1.8M747.3 795.18h1.8M763.6 795.18h1.8M747.3 789.71h1.8M763.6 789.71h1.8M747.3 778.78h1.8M763.6 778.78h1.8M747.3 773.31h1.8M763.6 773.31h1.8M747.3 762.38h1.8M763.6 762.38h1.8M747.3 756.91h1.8M763.6 756.91h1.8M747.3 751.44h1.8M763.6 751.44h1.8M747.3 740.51h1.8M763.6 740.51h1.8M747.3 735.04h1.8M763.6 735.04h1.8M747.3 724.11h1.8M763.6 724.11h1.8M747.3 718.64h1.8M763.6 718.64h1.8M747.3 707.70h1.8M763.6 707.70h1.8M747.3 702.24h1.8M763.6 702.24h1.8M747.3 691.30h1.8M763.6 691.30h1.8M747.3 685.83h1.8M763.6 685.83h1.8M747.3 674.90h1.8M763.6 674.90h1.8M747.3 669.43h1.8M763.6 669.43h1.8M747.3 658.50h1.8M763.6 658.50h1.8M747.3 653.03h1.8M763.6 653.03h1.8M747.3 642.10h1.8M763.6 642.10h1.8M747.3 636.63h1.8M763.6 636.63h1.8M747.3 625.69h1.8M763.6 625.69h1.8M747.3 620.23h1.8M763.6 620.23h1.8M747.3 614.76h1.8M763.6 614.76h1.8M747.3 603.83h1.8M763.6 603.83h1.8M747.3 598.36h1.8M763.6 598.36h1.8M747.3 587.42h1.8M763.6 587.42h1.8M747.3 581.96h1.8M763.6 581.96h1.8M747.3 571.02h1.8M763.6 571.02h1.8M747.3 565.55h1.8M763.6 565.55h1.8M747.3 554.62h1.8M763.6 554.62h1.8M747.3 549.15h1.8M763.6 549.15h1.8M747.3 538.22h1.8M763.6 538.22h1.8M747.3 532.75h1.8M763.6 532.75h1.8M747.3 521.82h1.8M763.6 521.82h1.8M747.3 516.35h1.8M763.6 516.35h1.8M747.3 505.41h1.8M763.6 505.41h1.8M747.3 499.95h1.8M763.6 499.95h1.8M747.3 489.01h1.8M763.6 489.01h1.8M747.3 483.55h1.8M763.6 483.55h1.8M747.3 478.08h1.8M763.6 478.08h1.8M747.3 467.14h1.8M763.6 467.14h1.8M747.3 461.68h1.8M763.6 461.68h1.8M747.3 450.74h1.8M763.6 450.74h1.8M747.3 445.27h1.8M763.6 445.27h1.8M747.3 434.34h1.8M763.6 434.34h1.8M747.3 428.87h1.8M763.6 428.87h1.8M747.3 417.94h1.8M763.6 417.94h1.8M747.3 412.47h1.8M763.6 412.47h1.8M747.3 401.54h1.8M763.6 401.54h1.8M747.3 396.07h1.8M763.6 396.07h1.8M747.3 385.13h1.8M763.6 385.13h1.8M747.3 379.67h1.8M763.6 379.67h1.8M747.3 368.73h1.8M763.6 368.73h1.8M747.3 363.27h1.8M763.6 363.27h1.8M747.3 352.33h1.8M763.6 352.33h1.8M747.3 346.86h1.8M763.6 346.86h1.8M747.3 341.40h1.8M763.6 341.40h1.8M747.3 330.46h1.8M763.6 330.46h1.8M747.3 324.99h1.8M763.6 324.99h1.8M747.3 314.06h1.8M763.6 314.06h1.8M747.3 308.59h1.8M763.6 308.59h1.8M747.3 297.66h1.8M763.6 297.66h1.8M747.3 292.19h1.8M763.6 292.19h1.8M747.3 281.26h1.8M763.6 281.26h1.8M747.3 275.79h1.8M763.6 275.79h1.8M747.3 264.85h1.8M763.6 264.85h1.8M747.3 259.39h1.8M763.6 259.39h1.8M747.3 248.45h1.8M763.6 248.45h1.8M747.3 242.99h1.8M763.6 242.99h1.8M747.3 232.05h1.8M763.6 232.05h1.8M747.3 226.58h1.8M763.6 226.58h1.8M747.3 215.65h1.8M763.6 215.65h1.8M747.3 210.18h1.8M763.6 210.18h1.8M747.3 204.71h1.8M763.6 204.71h1.8M747.3 193.78h1.8M763.6 193.78h1.8M747.3 188.31h1.8M763.6 188.31h1.8M747.3 177.38h1.8M763.6 177.38h1.8M747.3 171.91h1.8M763.6 171.91h1.8M747.3 160.98h1.8M763.6 160.98h1.8M747.3 155.51h1.8M763.6 155.51h1.8M747.3 144.57h1.8M763.6 144.57h1.8M747.3 139.11h1.8M763.6 139.11h1.8M747.3 128.17h1.8M763.6 128.17h1.8M747.3 122.71h1.8M763.6 122.71h1.8M747.3 111.77h1.8M763.6 111.77h1.8M747.3 106.30h1.8M763.6 106.30h1.8M747.3 95.37h1.8M763.6 95.37h1.8M747.3 89.90h1.8M763.6 89.90h1.8M747.3 78.97h1.8M763.6 78.97h1.8" stroke="#a0a0a0" stroke-width="1.05" fill="none"/><rect x="754.9" y="73" width="2.7" height="904" fill="#ed6b21"/><path d="M749.6 74c0-1.1.3-1.5.9-1.9l5-4.9c.5-.4.9-.4 1.4 0l5 4.9c.6.4.9.8.9 1.9z" fill="#ed6b21"/><path d="M749.6 975.6h13.3c0 .8-.3 1.1-.8 1.5l-5.2 4.3c-.5.4-.8.4-1.3 0l-5.2-4.3c-.5-.4-.8-.7-.8-1.5z" fill="#ed6b21"/><rect x="751.6" y="990.6" width="9.4" height="6.4" rx="0.8" fill="#ed6b21"/><rect x="755.4" y="992.7" width="1.9" height="2.4" fill="#2b2b2b"/><path d="M753.3 990.8v-1.6a2.9 2.9 0 0 1 5.8-.5" fill="none" stroke="#ed6b21" stroke-width="1.5"/><circle cx="796.00" cy="991.00" r="1.45" fill="#fff"/><circle cx="794.77" cy="993.97" r="1.45" fill="#fff"/><circle cx="791.80" cy="995.20" r="1.45" fill="#fff"/><circle cx="788.83" cy="993.97" r="1.45" fill="#fff"/><circle cx="787.60" cy="991.00" r="1.45" fill="#fff"/><circle cx="788.83" cy="988.03" r="1.45" fill="#fff"/><circle cx="791.80" cy="986.80" r="1.45" fill="#fff"/><circle cx="794.77" cy="988.03" r="1.45" fill="#fff"/><circle cx="791.8" cy="991" r="4.00" fill="none" stroke="#fff" stroke-width="1.7"/><circle cx="791.8" cy="991" r="2.60" fill="#2b2b2b" stroke="#c45a1f" stroke-width="1.1"/></svg>
<span class="t" style="left:721.3px;top:63px;font-size:10.3px;line-height:11px;transform:scaleX(0.834);color:#acacac;">26.68</span>
<span class="t" style="left:721.7px;top:75px;font-size:10.3px;line-height:11px;transform:scaleX(0.823);color:#acacac;">(166)</span>
<span class="t" style="left:769.9px;top:67px;font-size:10.3px;line-height:11px;transform:scaleX(0.838);color:#acacac;">26.68</span>
<span class="t" style="left:769.9px;top:78px;font-size:10.3px;line-height:11px;transform:scaleX(0.838);color:#acacac;">26.36</span>
<span class="t" style="left:769.9px;top:94px;font-size:10.3px;line-height:11px;transform:scaleX(0.838);color:#acacac;">25.88</span>
<span class="t" style="left:769.9px;top:111px;font-size:10.3px;line-height:11px;transform:scaleX(0.838);color:#acacac;">25.40</span>
<span class="t" style="left:769.9px;top:127px;font-size:10.3px;line-height:11px;transform:scaleX(0.838);color:#acacac;">24.92</span>
<span class="t" style="left:769.9px;top:144px;font-size:10.3px;line-height:11px;transform:scaleX(0.838);color:#acacac;">24.44</span>
<span class="t" style="left:769.9px;top:160px;font-size:10.3px;line-height:11px;transform:scaleX(0.838);color:#acacac;">23.96</span>
<span class="t" style="left:769.9px;top:176px;font-size:10.3px;line-height:11px;transform:scaleX(0.838);color:#acacac;">23.48</span>
<span class="t" style="left:769.9px;top:193px;font-size:10.3px;line-height:11px;transform:scaleX(0.838);color:#acacac;">23.00</span>
<span class="t" style="left:769.9px;top:215px;font-size:10.3px;line-height:11px;transform:scaleX(0.838);color:#acacac;">22.36</span>
<span class="t" style="left:769.9px;top:231px;font-size:10.3px;line-height:11px;transform:scaleX(0.838);color:#acacac;">21.88</span>
<span class="t" style="left:769.9px;top:248px;font-size:10.3px;line-height:11px;transform:scaleX(0.838);color:#acacac;">21.40</span>
<span class="t" style="left:769.9px;top:264px;font-size:10.3px;line-height:11px;transform:scaleX(0.838);color:#acacac;">20.92</span>
<span class="t" style="left:769.9px;top:280px;font-size:10.3px;line-height:11px;transform:scaleX(0.838);color:#acacac;">20.44</span>
<span class="t" style="left:769.9px;top:297px;font-size:10.3px;line-height:11px;transform:scaleX(0.838);color:#acacac;">19.96</span>
<span class="t" style="left:769.9px;top:313px;font-size:10.3px;line-height:11px;transform:scaleX(0.838);color:#acacac;">19.48</span>
<span class="t" style="left:769.9px;top:330px;font-size:10.3px;line-height:11px;transform:scaleX(0.838);color:#acacac;">19.00</span>
<span class="t" style="left:769.9px;top:351px;font-size:10.3px;line-height:11px;transform:scaleX(0.838);color:#acacac;">18.36</span>
<span class="t" style="left:769.9px;top:368px;font-size:10.3px;line-height:11px;transform:scaleX(0.838);color:#acacac;">17.88</span>
<span class="t" style="left:769.9px;top:384px;font-size:10.3px;line-height:11px;transform:scaleX(0.838);color:#acacac;">17.40</span>
<span class="t" style="left:769.9px;top:401px;font-size:10.3px;line-height:11px;transform:scaleX(0.838);color:#acacac;">16.92</span>
<span class="t" style="left:769.9px;top:417px;font-size:10.3px;line-height:11px;transform:scaleX(0.838);color:#acacac;">16.44</span>
<span class="t" style="left:769.9px;top:433px;font-size:10.3px;line-height:11px;transform:scaleX(0.838);color:#acacac;">15.96</span>
<span class="t" style="left:769.9px;top:450px;font-size:10.3px;line-height:11px;transform:scaleX(0.838);color:#acacac;">15.48</span>
<span class="t" style="left:769.9px;top:466px;font-size:10.3px;line-height:11px;transform:scaleX(0.838);color:#acacac;">15.00</span>
<span class="t" style="left:769.9px;top:488px;font-size:10.3px;line-height:11px;transform:scaleX(0.838);color:#acacac;">14.36</span>
<span class="t" style="left:769.9px;top:504px;font-size:10.3px;line-height:11px;transform:scaleX(0.838);color:#acacac;">13.88</span>
<span class="t" style="left:769.9px;top:521px;font-size:10.3px;line-height:11px;transform:scaleX(0.838);color:#acacac;">13.40</span>
<span class="t" style="left:769.9px;top:537px;font-size:10.3px;line-height:11px;transform:scaleX(0.838);color:#acacac;">12.92</span>
<span class="t" style="left:769.9px;top:554px;font-size:10.3px;line-height:11px;transform:scaleX(0.838);color:#acacac;">12.44</span>
<span class="t" style="left:769.9px;top:570px;font-size:10.3px;line-height:11px;transform:scaleX(0.864);color:#acacac;">11.96</span>
<span class="t" style="left:769.9px;top:586px;font-size:10.3px;line-height:11px;transform:scaleX(0.864);color:#acacac;">11.48</span>
<span class="t" style="left:769.9px;top:603px;font-size:10.3px;line-height:11px;transform:scaleX(0.864);color:#acacac;">11.00</span>
<span class="t" style="left:769.9px;top:625px;font-size:10.3px;line-height:11px;transform:scaleX(0.838);color:#acacac;">10.36</span>
<span class="t" style="left:769.9px;top:641px;font-size:10.3px;line-height:11px;transform:scaleX(0.828);color:#acacac;">9.88</span>
<span class="t" style="left:769.9px;top:658px;font-size:10.3px;line-height:11px;transform:scaleX(0.828);color:#acacac;">9.40</span>
<span class="t" style="left:769.9px;top:674px;font-size:10.3px;line-height:11px;transform:scaleX(0.828);color:#acacac;">8.92</span>
<span class="t" style="left:769.9px;top:690px;font-size:10.3px;line-height:11px;transform:scaleX(0.828);color:#acacac;">8.44</span>
<span class="t" style="left:769.9px;top:707px;font-size:10.3px;line-height:11px;transform:scaleX(0.828);color:#acacac;">7.96</span>
<span class="t" style="left:769.9px;top:723px;font-size:10.3px;line-height:11px;transform:scaleX(0.828);color:#acacac;">7.48</span>
<span class="t" style="left:769.9px;top:740px;font-size:10.3px;line-height:11px;transform:scaleX(0.828);color:#acacac;">7.00</span>
<span class="t" style="left:769.9px;top:761px;font-size:10.3px;line-height:11px;transform:scaleX(0.828);color:#acacac;">6.36</span>
<span class="t" style="left:769.9px;top:778px;font-size:10.3px;line-height:11px;transform:scaleX(0.828);color:#acacac;">5.88</span>
<span class="t" style="left:769.9px;top:794px;font-size:10.3px;line-height:11px;transform:scaleX(0.828);color:#acacac;">5.40</span>
<span class="t" style="left:769.9px;top:811px;font-size:10.3px;line-height:11px;transform:scaleX(0.828);color:#acacac;">4.92</span>
<span class="t" style="left:769.9px;top:827px;font-size:10.3px;line-height:11px;transform:scaleX(0.828);color:#acacac;">4.44</span>
<span class="t" style="left:769.9px;top:843px;font-size:10.3px;line-height:11px;transform:scaleX(0.828);color:#acacac;">3.96</span>
<span class="t" style="left:769.9px;top:860px;font-size:10.3px;line-height:11px;transform:scaleX(0.828);color:#acacac;">3.48</span>
<span class="t" style="left:769.9px;top:876px;font-size:10.3px;line-height:11px;transform:scaleX(0.828);color:#acacac;">3.00</span>
<span class="t" style="left:769.9px;top:898px;font-size:10.3px;line-height:11px;transform:scaleX(0.828);color:#acacac;">2.36</span>
<span class="t" style="left:769.9px;top:915px;font-size:10.3px;line-height:11px;transform:scaleX(0.828);color:#acacac;">1.88</span>
<span class="t" style="left:769.9px;top:931px;font-size:10.3px;line-height:11px;transform:scaleX(0.828);color:#acacac;">1.40</span>
<span class="t" style="left:769.9px;top:947px;font-size:10.3px;line-height:11px;transform:scaleX(0.828);color:#acacac;">0.92</span>
<span class="t" style="left:769.9px;top:964px;font-size:10.3px;line-height:11px;transform:scaleX(0.828);color:#acacac;">0.44</span>
<span class="t" style="left:769.9px;top:964px;font-size:10.3px;line-height:11px;transform:scaleX(0.828);color:#acacac;">0.28</span>
<span class="t" style="left:770.2px;top:975px;font-size:10.3px;line-height:11px;transform:scaleX(0.794);color:#acacac;">(1)</span>
<span class="t w" style="left:804.2px;top:63px;font-size:10.4px;line-height:11px;transform:scaleX(0.902);color:#fff;">Print settings:</span>
<span class="t w" style="left:804.2px;top:97px;font-size:10.4px;line-height:11px;transform:scaleX(0.893);color:#fff;">Filament:</span>
<span class="t w" style="left:804.2px;top:131px;font-size:10.4px;line-height:11px;transform:scaleX(0.895);color:#fff;">Printer:</span>
<div class="b " style="left:804.2px;top:75.7px;width:312.4px;height:18.9px;border:1px solid #4d4d4d;"></div>
<div class="b " style="left:804.2px;top:110.2px;width:312.4px;height:18.9px;border:1px solid #4d4d4d;"></div>
<div class="b " style="left:804.2px;top:144.6px;width:312.4px;height:18.9px;border:1px solid #4d4d4d;"></div>
<span class="t w" style="left:845.7px;top:79px;font-size:10.4px;line-height:11px;transform:scaleX(0.904);color:#fff;">PLA 0.20mm Normal</span>
<span class="t w" style="left:927.6px;top:78px;font-size:11px;line-height:12px;transform:scaleX(0.780);color:#fff;font-family:"Liberation Sans","Noto Sans CJK SC",sans-serif;">（</span>
<span class="t w" style="left:937.1px;top:79px;font-size:10.4px;line-height:11px;transform:scaleX(0.898);color:#fff;">0.4mm Nozzle</span>
<span class="t w" style="left:996.6px;top:78px;font-size:11px;line-height:12px;transform:scaleX(0.780);color:#fff;font-family:"Liberation Sans","Noto Sans CJK SC",sans-serif;">）</span>
<span class="t w" style="left:1004.7px;top:79px;font-size:10.4px;line-height:11px;transform:scaleX(0.956);color:#fff;">(modified)</span>
<span class="t w" style="left:845.7px;top:114px;font-size:10.4px;line-height:11px;transform:scaleX(0.888);color:#fff;">Anycubic Kobra 2 PLA</span>
<span class="t w" style="left:845.7px;top:148px;font-size:10.4px;line-height:11px;transform:scaleX(0.901);color:#fff;">Anycubic Kobra2-PLA</span>
<svg class="b" style="left:800px;top:62px;" width="335" height="160" viewBox="800 62 335 160"><circle cx="821.40" cy="85.20" r="1.45" fill="#fff"/><circle cx="820.17" cy="88.17" r="1.45" fill="#fff"/><circle cx="817.20" cy="89.40" r="1.45" fill="#fff"/><circle cx="814.23" cy="88.17" r="1.45" fill="#fff"/><circle cx="813.00" cy="85.20" r="1.45" fill="#fff"/><circle cx="814.23" cy="82.23" r="1.45" fill="#fff"/><circle cx="817.20" cy="81.00" r="1.45" fill="#fff"/><circle cx="820.17" cy="82.23" r="1.45" fill="#fff"/><circle cx="817.2" cy="85.2" r="4.00" fill="none" stroke="#fff" stroke-width="1.7"/><circle cx="817.2" cy="85.2" r="2.60" fill="#2b2b2b" stroke="#c45a1f" stroke-width="1.1"/><circle cx="1129.50" cy="84.40" r="1.45" fill="#fff"/><circle cx="1128.27" cy="87.37" r="1.45" fill="#fff"/><circle cx="1125.30" cy="88.60" r="1.45" fill="#fff"/><circle cx="1122.33" cy="87.37" r="1.45" fill="#fff"/><circle cx="1121.10" cy="84.40" r="1.45" fill="#fff"/><circle cx="1122.33" cy="81.43" r="1.45" fill="#fff"/><circle cx="1125.30" cy="80.20" r="1.45" fill="#fff"/><circle cx="1128.27" cy="81.43" r="1.45" fill="#fff"/><circle cx="1125.3" cy="84.4" r="4.00" fill="none" stroke="#fff" stroke-width="1.7"/><circle cx="1125.3" cy="84.4" r="2.60" fill="#2b2b2b" stroke="#c45a1f" stroke-width="1.1"/><circle cx="1129.50" cy="118.80" r="1.45" fill="#fff"/><circle cx="1128.27" cy="121.77" r="1.45" fill="#fff"/><circle cx="1125.30" cy="123.00" r="1.45" fill="#fff"/><circle cx="1122.33" cy="121.77" r="1.45" fill="#fff"/><circle cx="1121.10" cy="118.80" r="1.45" fill="#fff"/><circle cx="1122.33" cy="115.83" r="1.45" fill="#fff"/><circle cx="1125.30" cy="114.60" r="1.45" fill="#fff"/><circle cx="1128.27" cy="115.83" r="1.45" fill="#fff"/><circle cx="1125.3" cy="118.8" r="4.00" fill="none" stroke="#fff" stroke-width="1.7"/><circle cx="1125.3" cy="118.8" r="2.60" fill="#2b2b2b" stroke="#c45a1f" stroke-width="1.1"/><circle cx="1129.50" cy="153.20" r="1.45" fill="#fff"/><circle cx="1128.27" cy="156.17" r="1.45" fill="#fff"/><circle cx="1125.30" cy="157.40" r="1.45" fill="#fff"/><circle cx="1122.33" cy="156.17" r="1.45" fill="#fff"/><circle cx="1121.10" cy="153.20" r="1.45" fill="#fff"/><circle cx="1122.33" cy="150.23" r="1.45" fill="#fff"/><circle cx="1125.30" cy="149.00" r="1.45" fill="#fff"/><circle cx="1128.27" cy="150.23" r="1.45" fill="#fff"/><circle cx="1125.3" cy="153.2" r="4.00" fill="none" stroke="#fff" stroke-width="1.7"/><circle cx="1125.3" cy="153.2" r="2.60" fill="#2b2b2b" stroke="#c45a1f" stroke-width="1.1"/><path d="M1104.4 83.3l4.3 3.8l4.3-3.8" fill="none" stroke="#a6a6a6" stroke-width="1"/><path d="M1104.4 117.7l4.3 3.8l4.3-3.8" fill="none" stroke="#a6a6a6" stroke-width="1"/><path d="M1104.4 152.1l4.3 3.8l4.3-3.8" fill="none" stroke="#a6a6a6" stroke-width="1"/><rect x="808.2" y="113.6" width="18.8" height="12" fill="#e8e8e8"/><rect x="809" y="114.4" width="11.2" height="10.4" fill="#2cb3b3"/><rect x="820.8" y="114.4" width="5.5" height="10.4" fill="#ffff00"/><rect x="812.5" y="148.9" width="10" height="9.6" fill="none" stroke="#fff" stroke-width="1"/><path d="M812.5 152.2h10" stroke="#fff" stroke-width="1"/><circle cx="814.2" cy="152" r="1.5" fill="#ed6b21"/><path d="M1104.4 176.6l4.3 3.8l4.3-3.8" fill="none" stroke="#a6a6a6" stroke-width="1"/><path d="M879.2 198.2l4.3 3.8l4.3-3.8" fill="none" stroke="#a6a6a6" stroke-width="1"/><rect x="931.8" y="193.7" width="11.6" height="11.3" rx="1" fill="#ed6b21"/><path d="M934.3 199.3l2.6 2.7l4.3-5" fill="none" stroke="#fff" stroke-width="1.2"/></svg>
<span class="t w" style="left:804.9px;top:173px;font-size:10.4px;line-height:11px;transform:scaleX(0.876);color:#fff;">Supports:</span>
<div class="b " style="left:846.9px;top:169.3px;width:269.7px;height:18.4px;border:1px solid #4d4d4d;"></div>
<span class="t w" style="left:851.2px;top:173px;font-size:10.4px;line-height:11px;transform:scaleX(0.909);color:#fff;">For support enforcers only</span>
<span class="t w" style="left:804.9px;top:194px;font-size:10.4px;line-height:11px;transform:scaleX(0.926);color:#fff;">Infill:</span>
<div class="b " style="left:828.2px;top:190.4px;width:63.2px;height:18.7px;border:1px solid #4d4d4d;"></div>
<span class="t w" style="left:834.8px;top:194px;font-size:10.4px;line-height:11px;transform:scaleX(0.831);color:#fff;">10%</span>
<span class="t w" style="left:906.7px;top:194px;font-size:10.4px;line-height:11px;transform:scaleX(0.898);color:#fff;">Brim:</span>
<div class="b " style="left:804.2px;top:214.7px;width:328.8px;height:154.6px;background:#4d4d4d;border:1px solid #5c5c5c;"></div>
<div class="b " style="left:805px;top:215.4px;width:327.2px;height:18.3px;background:#151515;"></div>
<div class="b " style="left:963px;top:215.4px;width:1px;height:18.3px;background:#5a5a5a;"></div>
<div class="b " style="left:987px;top:215.4px;width:1px;height:18.3px;background:#5a5a5a;"></div>
<span class="t w" style="left:809.7px;top:219px;font-size:10.4px;line-height:11px;transform:scaleX(0.919);color:#fff;">Name</span>
<span class="t w" style="left:1045.9px;top:219px;font-size:10.4px;line-height:11px;transform:scaleX(0.918);color:#fff;">Editing</span>
<span class="t w" style="left:820px;top:237px;font-size:10.4px;line-height:11px;transform:scaleX(0.889);color:#fff;">HVAC_fault_diagn...right_pin_1.stl</span>
<span class="t w" style="left:820px;top:254px;font-size:10.4px;line-height:11px;transform:scaleX(0.889);color:#fff;">HVAC_fault_diagn...right_pin_2.stl</span>
<span class="t w" style="left:820px;top:272px;font-size:10.4px;line-height:11px;transform:scaleX(0.884);color:#fff;">HVAC_fault_diag...ction_rod_1.stl</span>
<span class="t w" style="left:820px;top:289px;font-size:10.4px;line-height:11px;transform:scaleX(0.884);color:#fff;">HVAC_fault_diag...ction_rod_2.stl</span>
<span class="t w" style="left:820px;top:307px;font-size:10.4px;line-height:11px;transform:scaleX(0.894);color:#fff;">HVAC_fault_dia...h_connector.stl</span>
<svg class="b" style="left:960px;top:232px;" width="120" height="95" viewBox="960 232 120 95"><path d="M970.3 242.7c1.6-2.6 3.6-3.7 5.6-3.7s4 1.1 5.6 3.7c-1.6 2.6-3.6 3.7-5.6 3.7s-4-1.1-5.6-3.7z" fill="#fff"/><circle cx="975.9" cy="242.7" r="2.1" fill="#4d4d4d"/><circle cx="975.9" cy="242.7" r="0.9" fill="#fff"/><path d="M1059.7 240.0h-4.2a1 1 0 0 0-1 1v5.8a1 1 0 0 0 1 1h5.8a1 1 0 0 0 1-1v-3.9" fill="none" stroke="#e2e2e2" stroke-width="1"/><circle cx="1062.2" cy="239.7" r="1.9" fill="none" stroke="#ed6b21" stroke-width="1.1"/><path d="M970.3 260.2c1.6-2.6 3.6-3.7 5.6-3.7s4 1.1 5.6 3.7c-1.6 2.6-3.6 3.7-5.6 3.7s-4-1.1-5.6-3.7z" fill="#fff"/><circle cx="975.9" cy="260.2" r="2.1" fill="#4d4d4d"/><circle cx="975.9" cy="260.2" r="0.9" fill="#fff"/><path d="M1059.7 257.49999999999994h-4.2a1 1 0 0 0-1 1v5.8a1 1 0 0 0 1 1h5.8a1 1 0 0 0 1-1v-3.9" fill="none" stroke="#e2e2e2" stroke-width="1"/><circle cx="1062.2" cy="257.2" r="1.9" fill="none" stroke="#ed6b21" stroke-width="1.1"/><path d="M970.3 277.7c1.6-2.6 3.6-3.7 5.6-3.7s4 1.1 5.6 3.7c-1.6 2.6-3.6 3.7-5.6 3.7s-4-1.1-5.6-3.7z" fill="#fff"/><circle cx="975.9" cy="277.7" r="2.1" fill="#4d4d4d"/><circle cx="975.9" cy="277.7" r="0.9" fill="#fff"/><path d="M1059.7 274.99999999999994h-4.2a1 1 0 0 0-1 1v5.8a1 1 0 0 0 1 1h5.8a1 1 0 0 0 1-1v-3.9" fill="none" stroke="#e2e2e2" stroke-width="1"/><circle cx="1062.2" cy="274.7" r="1.9" fill="none" stroke="#ed6b21" stroke-width="1.1"/><path d="M970.3 295.2c1.6-2.6 3.6-3.7 5.6-3.7s4 1.1 5.6 3.7c-1.6 2.6-3.6 3.7-5.6 3.7s-4-1.1-5.6-3.7z" fill="#fff"/><circle cx="975.9" cy="295.2" r="2.1" fill="#4d4d4d"/><circle cx="975.9" cy="295.2" r="0.9" fill="#fff"/><path d="M1059.7 292.49999999999994h-4.2a1 1 0 0 0-1 1v5.8a1 1 0 0 0 1 1h5.8a1 1 0 0 0 1-1v-3.9" fill="none" stroke="#e2e2e2" stroke-width="1"/><circle cx="1062.2" cy="292.2" r="1.9" fill="none" stroke="#ed6b21" stroke-width="1.1"/><path d="M970.3 312.7c1.6-2.6 3.6-3.7 5.6-3.7s4 1.1 5.6 3.7c-1.6 2.6-3.6 3.7-5.6 3.7s-4-1.1-5.6-3.7z" fill="#fff"/><circle cx="975.9" cy="312.7" r="2.1" fill="#4d4d4d"/><circle cx="975.9" cy="312.7" r="0.9" fill="#fff"/><path d="M1059.7 309.99999999999994h-4.2a1 1 0 0 0-1 1v5.8a1 1 0 0 0 1 1h5.8a1 1 0 0 0 1-1v-3.9" fill="none" stroke="#e2e2e2" stroke-width="1"/><circle cx="1062.2" cy="309.7" r="1.9" fill="none" stroke="#ed6b21" stroke-width="1.1"/></svg>
<div class="b " style="left:804.2px;top:360px;width:328.8px;height:509.3px;background:#4d4d4d;border:1px solid #5c5c5c;border-top:none;"></div>
<div class="b " style="left:804.2px;top:879.5px;width:332px;height:85px;border:1px solid #c9c9c9;border-right:none;"></div>
<div class="b " style="left:809.8px;top:876px;width:49.6px;height:8px;background:#2b2b2b;"></div>
<span class="t w" style="left:811.2px;top:874px;font-size:10.4px;line-height:11px;transform:scaleX(0.884);color:#fff;font-weight:bold;">Sliced Info</span>
<span class="t w" style="left:808.2px;top:887px;font-size:10.4px;line-height:11px;transform:scaleX(0.888);color:#fff;">Used Filament (g)</span>
<span class="t w" style="left:921px;top:887px;font-size:10.4px;line-height:11px;transform:scaleX(0.818);color:#fff;">42.70</span>
<span class="t w" style="left:808.2px;top:904px;font-size:10.4px;line-height:11px;transform:scaleX(0.899);color:#fff;">Used Filament (m)</span>
<span class="t w" style="left:921.6px;top:904px;font-size:10.4px;line-height:11px;transform:scaleX(0.795);color:#fff;">14.32</span>
<span class="t w" style="left:808.2px;top:921px;font-size:10.4px;line-height:11px;transform:scaleX(0.907);color:#fff;">Used Filament (mm</span>
<span class="t w" style="left:890.4px;top:920px;font-size:6.5px;line-height:7px;transform:scaleX(0.900);color:#fff;">3</span>
<span class="t w" style="left:893.8px;top:921px;font-size:10.4px;line-height:11px;transform:scaleX(0.900);color:#fff;">)</span>
<span class="t w" style="left:921px;top:921px;font-size:10.4px;line-height:11px;transform:scaleX(0.825);color:#fff;">34435.09</span>
<span class="t w" style="left:808.2px;top:938px;font-size:10.4px;line-height:11px;transform:scaleX(0.924);color:#fff;">Estimated printing time:</span>
<span class="t w" style="left:815.7px;top:949px;font-size:10.4px;line-height:11px;transform:scaleX(0.938);color:#fff;">- normal mode</span>
<span class="t w" style="left:921.3px;top:949px;font-size:10.4px;line-height:11px;transform:scaleX(0.880);color:#fff;">1h45m</span>
<div class="b " style="left:804.2px;top:970.1px;width:331px;height:24.6px;background:#4e4e4e;"></div>
<span class="t w" style="left:937.1px;top:977px;font-size:10.4px;line-height:11px;transform:scaleX(0.900);color:#fff;font-weight:bold;">Export G-code</span>
<div class="b" style="left:0;top:0;width:1135px;height:1000px;border:1px solid #747474;border-radius:7px;box-shadow:0 0 0 8px #b0b0b0;"></div>
</body></html>
